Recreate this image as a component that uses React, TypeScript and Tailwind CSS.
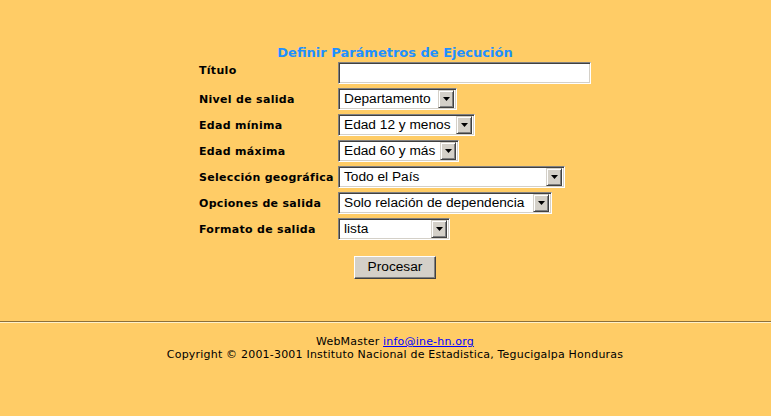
const labelFont = { fontFamily: '"DejaVu Sans", Verdana, sans-serif' };

function Arrow() {
    return (
        <span className="flex h-[18px] w-[16px] items-center justify-center border border-t-[#d4d0c8] border-l-[#d4d0c8] border-b-[#404040] border-r-[#404040] bg-[#d4d0c8] shadow-[inset_1px_1px_0_#ffffff,inset_-1px_-1px_0_#808080]">
            <svg width="7" height="4" viewBox="0 0 7 4">
                <path d="M0 0h7L3.5 4z" fill="#000" />
            </svg>
        </span>
    );
}

function Select({ value, width }: { value: string; width: string }) {
    return (
        <div
            className={`flex h-[22px] ${width} items-center border border-t-[#808080] border-l-[#808080] border-b-white border-r-white bg-white shadow-[inset_1px_1px_0_#404040,inset_-1px_-1px_0_#d4d0c8]`}
        >
            <span className="flex-1 truncate pl-[5px] text-[13.7px] leading-none text-black font-['Liberation_Sans',Arial,sans-serif]">{value}</span>
            <span className="pr-[2px]">
                <Arrow />
            </span>
        </div>
    );
}

export default function App() {
    const rows = [
        { label: 'Nivel de salida', value: 'Departamento', width: 'w-[119px]' },
        { label: 'Edad mínima', value: 'Edad 12 y menos', width: 'w-[137px]' },
        { label: 'Edad máxima', value: 'Edad 60 y más', width: 'w-[121px]' },
        { label: 'Selección geográfica', value: 'Todo el País', width: 'w-[227px]' },
        { label: 'Opciones de salida', value: 'Solo relación de dependencia', width: 'w-[214px]' },
        { label: 'Formato de salida', value: 'lista', width: 'w-[112px]' },
    ];

    return (
        <div className="min-h-[416px] w-full bg-[#ffcc66]" style={labelFont}>
            <div className="flex flex-col items-center pl-[19px] pt-[45px]">
                <h1 className="h-[17px] text-[13px] font-bold leading-[16px] text-[#1e90ff]">Definir Parámetros de Ejecución</h1>
                <div className="grid grid-cols-[139px_253px] gap-y-[4px]">
                    <div className="pt-[1px] text-[11px] font-bold leading-[15px] tracking-[0.3px] text-black">Título</div>
                    <div className="h-[22px] w-[253px] border border-t-[#808080] border-l-[#808080] border-b-white border-r-white bg-white shadow-[inset_1px_1px_0_#404040,inset_-1px_-1px_0_#d4d0c8]" />
                    {rows.map((r) => (
                        <>
                            <div key={r.label} className="h-[22px] pt-[1px] text-[11px] font-bold leading-[22px] tracking-[0.3px] text-black">{r.label}</div>
                            <Select key={r.label + 's'} value={r.value} width={r.width} />
                        </>
                    ))}
                </div>
                <button className="mt-[16px] h-[23px] w-[82px] border border-t-white border-l-white border-b-[#404040] border-r-[#404040] bg-[#d4d0c8] text-[13.7px] text-black shadow-[inset_-1px_-1px_0_#808080] font-['Liberation_Sans',Arial,sans-serif]">
                    Procesar
                </button>
            </div>
            <div className="mt-[42px] border-t border-b border-t-[#8c6f3a] border-b-[#fff0c8]" />
            <div className="flex flex-col items-center pl-[19px] pt-[12px] text-[11px] leading-[13px] tracking-[0.2px] text-black">
                <div>
                    WebMaster <a href="#" className="text-[#0000ff] underline">info@ine-hn.org</a>
                </div>
                <div>Copyright © 2001-3001 Instituto Nacional de Estadistica, Tegucigalpa Honduras</div>
            </div>
        </div>
    );
}
